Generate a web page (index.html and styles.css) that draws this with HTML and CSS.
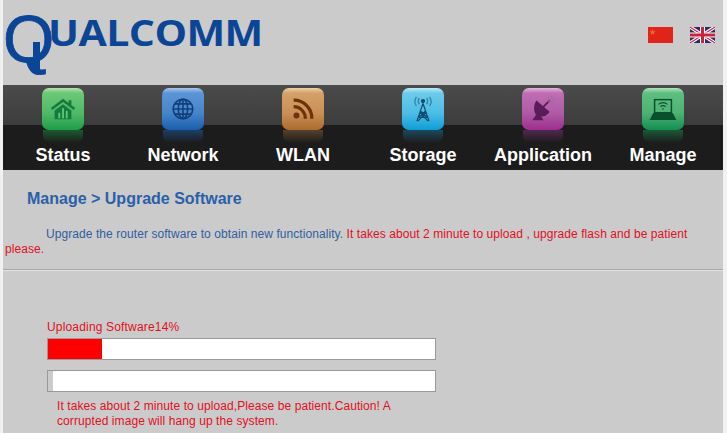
FILE: index.html
```html
<!DOCTYPE html>
<html lang="en">
<head>
<meta charset="utf-8">
<title>Manage - Upgrade Software</title>
<link rel="stylesheet" href="styles.css">
</head>
<body>
<div class="page">
  <header class="top">
    <div class="logo"><span class="logo-q">Q</span><span class="logo-rest">UALCOMM</span></div>
    <div class="flags">
      <svg class="flag" viewBox="0 0 25 16" aria-label="Chinese">
        <rect width="25" height="16" fill="#e2231a"/>
        <polygon points="4.5,1.8 5.3,4.2 7.8,4.2 5.8,5.7 6.5,8 4.5,6.6 2.5,8 3.2,5.7 1.2,4.2 3.7,4.2" fill="#ee6a2a"/>
      </svg>
      <svg class="flag" viewBox="0 0 25 16" aria-label="English">
        <rect width="25" height="16" fill="#2b2c6e"/>
        <path d="M0 0 25 16M25 0 0 16" stroke="#fff" stroke-width="3.4"/>
        <path d="M0 0 25 16M25 0 0 16" stroke="#c8243c" stroke-width="1.1"/>
        <path d="M12.5 0V16M0 8H25" stroke="#fff" stroke-width="5"/>
        <path d="M12.5 0V16M0 8H25" stroke="#c8243c" stroke-width="3"/>
      </svg>
    </div>
  </header>

  <nav class="nav">
    <a class="nav-item c-green">
      <span class="tile">
        <svg class="glyph" viewBox="0 0 30 30" fill="#167a3a">
          <path d="M15 4 21 8.500V5.500H24V10.800L28 14 26.500 16 15 7.500 3.500 16 2 14Z"/>
          <path d="M6 16.500 15 9.800 24 16.500V26H6Z"/>
          <g fill="#5cc679"><rect x="10" y="19" width="2" height="6"/><rect x="14" y="14" width="2" height="11"/><rect x="18" y="17" width="2" height="8"/></g>
        </svg>
      </span>
      <span class="mirror"></span>
      <span class="label">Status</span>
    </a>
    <a class="nav-item c-blue">
      <span class="tile">
        <svg class="glyph" viewBox="0 0 30 30" fill="none" stroke="#123f7c" stroke-width="1.700">
          <circle cx="15" cy="15" r="10.500"/>
          <ellipse cx="15" cy="15" rx="5" ry="10.500"/>
          <path d="M15 4.500V25.500M4.500 15H25.500M6.200 9.500H23.800M6.200 20.500H23.800"/>
        </svg>
      </span>
      <span class="mirror"></span>
      <span class="label">Network</span>
    </a>
    <a class="nav-item c-brown">
      <span class="tile">
        <svg class="glyph" viewBox="0 0 30 30" fill="none" stroke="#6e3208" stroke-width="3.400">
          <circle cx="8" cy="22" r="3.200" fill="#6e3208" stroke="none"/>
          <path d="M5 12.500A12.500 12.500 0 0 1 17.500 25.500"/>
          <path d="M5 5.500A19.500 19.500 0 0 1 24.500 25.500"/>
        </svg>
      </span>
      <span class="mirror"></span>
      <span class="label">WLAN</span>
    </a>
    <a class="nav-item c-cyan">
      <span class="tile">
        <svg class="glyph" viewBox="0 0 30 30" fill="none" stroke="#0f4f72" stroke-width="1.400">
          <path d="M15 9 8.500 28M15 9 21.500 28M11.500 19H18.500M10 24H20M12 17 20 24M18 17 10 24M12 19 20.500 28M18 19 9.500 28"/>
          <circle cx="15" cy="6.500" r="1.600" fill="#0f4f72"/>
          <path d="M11 3C9.800 5 9.800 8 11 10M19 3C20.200 5 20.200 8 19 10M8 2C6 5 6 9 8 12M22 2C24 5 24 9 22 12" stroke="#2f86a8"/>
        </svg>
      </span>
      <span class="mirror"></span>
      <span class="label">Storage</span>
    </a>
    <a class="nav-item c-purple">
      <span class="tile">
        <svg class="glyph" viewBox="0 0 30 30" fill="#5a1c58">
          <path d="M8 6 22 18C20 22 16 23.500 13 23L15.500 27H3.500L7.500 21.500C4.500 17 5 10 8 6Z"/>
          <path d="M14 14 22 6" stroke="#5a1c58" stroke-width="2"/>
          <path d="M20 2 27 9M23 1 28 6M19 5 24 10" stroke="#a8699f" stroke-width="1.200"/>
        </svg>
      </span>
      <span class="mirror"></span>
      <span class="label">Application</span>
    </a>
    <a class="nav-item c-mint">
      <span class="tile">
        <svg class="glyph" viewBox="0 0 30 30" fill="none" stroke="#0c4f2c" stroke-width="1.600">
          <rect x="6" y="5" width="18" height="14"/>
          <path d="M10 10C13 7.800 17 7.800 20 10M12 12.500C14 11 16 11 18 12.500M14 15H16" stroke-width="1.100"/>
          <path d="M5 20H25L28 26H2Z" fill="#0c4f2c"/>
        </svg>
      </span>
      <span class="mirror"></span>
      <span class="label">Manage</span>
    </a>
  </nav>

  <main class="content">
    <h1 class="title">Manage &gt; Upgrade Software</h1>
    <p class="intro"><span class="intro-blue">Upgrade the router software to obtain new functionality.</span> It takes about 2 minute to upload , upgrade flash and be patient please.</p>
    <hr class="rule">
    <section class="upload">
      <div class="status">Uploading Software14%</div>
      <div class="bar"><div class="fill-red" style="width:14%"></div></div>
      <div class="bar"><div class="fill-gray" style="width:1.400%"></div></div>
      <p class="note">It takes about 2 minute to upload,Please be patient.Caution! A corrupted image will hang up the system.</p>
    </section>
  </main>
</div>
</body>
</html>
```
FILE: styles.css
```css
* { box-sizing: border-box; }
html, body { margin: 0; height: 100%; overflow: hidden; }
body { background: #f1f1f1; font-family: "Liberation Sans", Arial, sans-serif; }

.page {
  width: 720px;
  height: 433px;
  margin-left: 3px;
  background: #cbcbcb;
  overflow: hidden;
}

.top {
  height: 85px;
  display: flex;
  justify-content: space-between;
  padding: 27px 8px 0 0;
}

.logo {
  display: flex;
  height: 40px;
  color: #0b4596;
  white-space: nowrap;
}
.logo-q {
  position: relative;
  font-size: 66px;
  line-height: 40px;
  margin-top: -8px;
  margin-right: -6px;
  -webkit-text-stroke: 0.8px #0b4596;
}
.logo-q::after {
  content: "";
  position: absolute;
  left: 30px;
  top: 23px;
  width: 7px;
  height: 28px;
  background: #0b4596;
}
.logo-rest {
  font-family: "Open Sans", sans-serif;
  font-weight: 700;
  font-size: 36px;
  line-height: 38px;
  letter-spacing: -0.5px;
  transform: scaleX(1.140);
  transform-origin: left;
  margin-top: -13px;
}

.flags { display: flex; gap: 17px; }
.flag { display: block; width: 25px; height: 16px; }

.nav {
  height: 85px;
  display: grid;
  grid-template-columns: repeat(6, 1fr);
  background: linear-gradient(#1c1c1c 0 0) bottom / 100% 45px no-repeat,
              linear-gradient(#4b4b4b, #2c2c2c);
}
.nav-item {
  display: flex;
  flex-direction: column;
  align-items: center;
  padding-top: 3px;
}
.tile {
  width: 42px;
  height: 42px;
  border-radius: 7px;
  display: flex;
  align-items: center;
  justify-content: center;
}
.glyph { width: 28px; height: 28px; display: block; }
.mirror {
  width: 40px;
  height: 13px;
  border-radius: 0 0 7px 7px;
}
.label {
  margin-top: 1px;
  font-size: 18px;
  line-height: 22px;
  font-weight: 700;
  color: #fff;
}

.c-green .tile { background: linear-gradient(#b5e3a9, #6cc878 12%, #4fb968 60%, #1f9c49); }
.c-green .mirror { background: linear-gradient(#1b5a30, #1c1c1c); }
.c-blue .tile { background: linear-gradient(#a9c8ea, #5b95d6 12%, #4585ca 60%, #1a5dab); }
.c-blue .mirror { background: linear-gradient(#1c3f66, #1c1c1c); }
.c-brown .tile { background: linear-gradient(#efd2a4, #d3a16a 12%, #c98f55 60%, #ab6c2e); }
.c-brown .mirror { background: linear-gradient(#56412b, #1c1c1c); }
.c-cyan .tile { background: linear-gradient(#bcecf6, #6dcbea 12%, #4cbde6 60%, #0e9dd6); }
.c-cyan .mirror { background: linear-gradient(#1b4a5e, #1c1c1c); }
.c-purple .tile { background: linear-gradient(#e6b4de, #bf6eb4 12%, #b05aa6 60%, #9d2e8d); }
.c-purple .mirror { background: linear-gradient(#52284e, #1c1c1c); }
.c-mint .tile { background: linear-gradient(#b2e4ba, #5fbe80 12%, #4db274 60%, #128f50); }
.c-mint .mirror { background: linear-gradient(#1a5a38, #1c1c1c); }

.content { padding-top: 19px; }
.title {
  margin: 0 0 0 24px;
  font-size: 16px;
  line-height: 19px;
  font-weight: 700;
  color: #2a60a8;
}
.intro {
  margin: 19px 30px 0 2px;
  font-size: 12px;
  line-height: 15px;
  letter-spacing: 0.07px;
  text-indent: 41px;
  color: #e0101e;
}
.intro-blue { color: #2f5e9e; }
.rule {
  margin: 12px 0 0;
  height: 2px;
  border: 0;
  background: linear-gradient(#a6a6a6 50%, #e4e4e4 50%);
}

.upload { padding: 49px 0 0 44px; }
.status {
  font-size: 12px;
  line-height: 14px;
  letter-spacing: 0.17px;
  color: #e0101e;
  margin-bottom: 4px;
}
.bar {
  width: 389px;
  height: 22px;
  border: 1px solid #999;
  background: #fff;
}
.bar + .bar { margin-top: 10px; }
.fill-red { height: 100%; background: #ff0000; }
.fill-gray { height: 100%; background: #cbcbcb; }
.note {
  margin: 7px 0 0 10px;
  width: 345px;
  font-size: 12px;
  line-height: 15px;
  letter-spacing: 0.08px;
  color: #e0101e;
}
```
